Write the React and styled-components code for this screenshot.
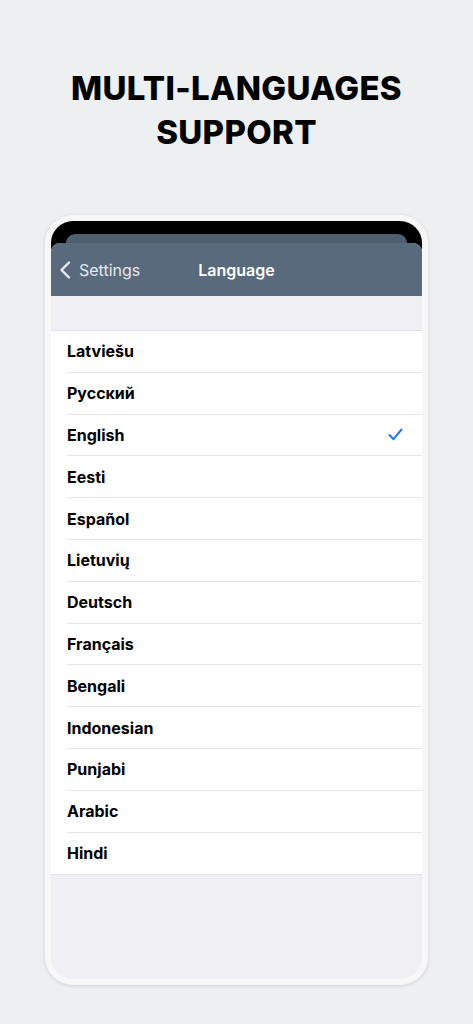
import React from "react";
import styled, { createGlobalStyle } from "styled-components";

const Global = createGlobalStyle`
  html, body {
    margin: 0;
    padding: 0;
    background: #eeeff1;
  }
  body {
    font-family: Inter, "Liberation Sans", sans-serif;
  }
`;

const Page = styled.div`
  width: 473px;
  height: 1024px;
  display: flex;
  flex-direction: column;
  align-items: center;
  background: #eeeff1;
`;

const Title = styled.h1`
  margin: 66px 0 0;
  font-family: Inter, "Liberation Sans", sans-serif;
  font-weight: 800;
  font-size: 33px;
  line-height: 44px;
  letter-spacing: 0.3px;
  text-align: center;
  color: #000;
`;

const Phone = styled.div`
  margin-top: 61px;
  width: 371px;
  height: 758px;
  padding: 6px;
  border-radius: 28px;
  background: #f7f7f7;
  box-shadow: 0 1px 4px rgba(0, 0, 0, 0.12);
`;

const Screen = styled.div`
  height: 100%;
  border-radius: 22px;
  overflow: hidden;
  background: linear-gradient(#000 0 40px, #efeff4 40px);
  display: flex;
  flex-direction: column;
  padding-top: 13px;
  box-sizing: border-box;
`;

const BackSheet = styled.div`
  margin: 0 15px;
  height: 9px;
  border-radius: 9px 9px 0 0;
  background: #4f5f70;
`;

const Sheet = styled.div`
  flex: 1;
  display: flex;
  flex-direction: column;
  border-radius: 9px 9px 0 0;
  overflow: hidden;
  background: #efeff4;
`;

const NavBar = styled.div`
  height: 53px;
  background: #586a7c;
  display: flex;
  align-items: center;
  position: relative;
  padding-left: 8px;
  flex-shrink: 0;
`;

const Back = styled.div`
  display: flex;
  align-items: center;
  gap: 8px;
  color: #e4e8ec;
  font-size: 16px;
`;

const NavTitle = styled.div`
  position: absolute;
  left: 0;
  right: 0;
  text-align: center;
  color: #fff;
  font-weight: 600;
  font-size: 16px;
  pointer-events: none;
`;

const Spacer = styled.div`
  height: 34px;
  border-bottom: 1px solid #e2e2e6;
`;

const List = styled.div`
  background: #fff;
  border-bottom: 1px solid #e2e2e6;
`;

const Row = styled.div`
  height: 41.8px;
  margin-left: 16px;
  padding-right: 19px;
  display: flex;
  align-items: center;
  justify-content: space-between;
  border-bottom: ${(p) => (p.$last ? "none" : "1px solid #e6e6ea")};
  box-sizing: border-box;
  font-size: 16px;
  font-weight: 700;
  color: #000;
`;

const Check = () => (
  <svg width="15" height="13" viewBox="0 0 15 13" fill="none">
    <path
      d="M1.5 7 L5.5 11.2 L13.5 1.5"
      stroke="#1a7cf5"
      strokeWidth="2"
      strokeLinecap="round"
      strokeLinejoin="round"
    />
  </svg>
);

const Chevron = () => (
  <svg width="12" height="18" viewBox="0 0 12 18" fill="none">
    <path
      d="M10 1.5 L2.5 9 L10 16.5"
      stroke="#e8ebef"
      strokeWidth="2.4"
      strokeLinecap="round"
      strokeLinejoin="round"
    />
  </svg>
);

const languages = [
  "Latviešu",
  "Русский",
  "English",
  "Eesti",
  "Español",
  "Lietuvių",
  "Deutsch",
  "Français",
  "Bengali",
  "Indonesian",
  "Punjabi",
  "Arabic",
  "Hindi",
];

export default function App() {
  return (
    <Page>
      <Global />
      <Title>
        MULTI-LANGUAGES
        <br />
        SUPPORT
      </Title>
      <Phone>
        <Screen>
          <BackSheet />
          <Sheet>
            <NavBar>
              <Back>
                <Chevron />
                Settings
              </Back>
              <NavTitle>Language</NavTitle>
            </NavBar>
            <Spacer />
            <List>
              {languages.map((l, i) => (
                <Row key={l} $last={i === languages.length - 1}>
                  {l}
                  {l === "English" && <Check />}
                </Row>
              ))}
            </List>
          </Sheet>
        </Screen>
      </Phone>
    </Page>
  );
}
